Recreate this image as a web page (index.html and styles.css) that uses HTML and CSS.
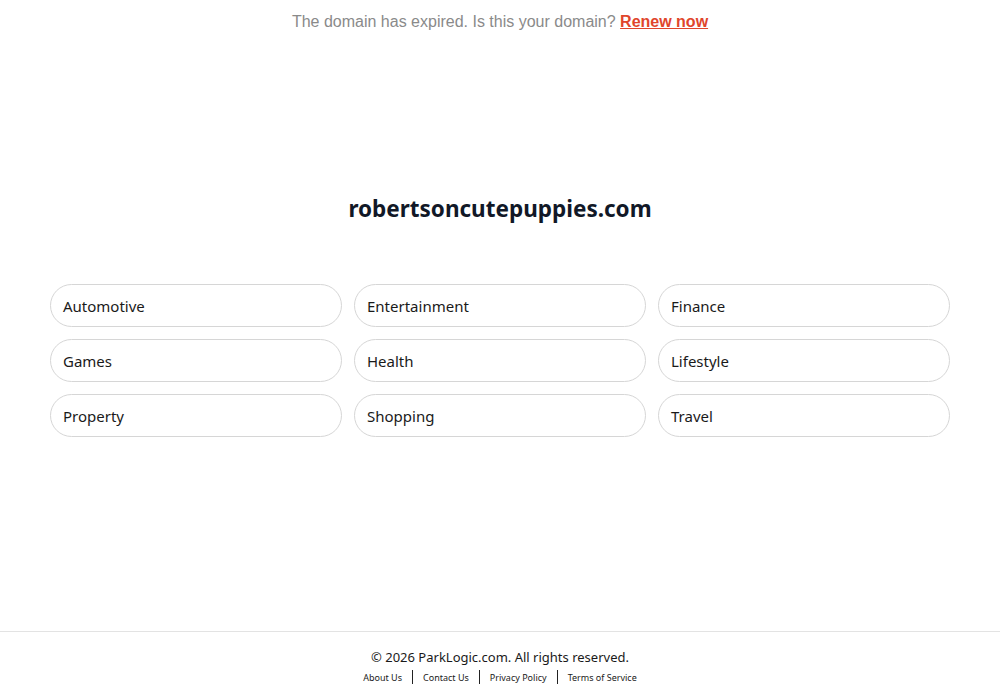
FILE: index.html
```html
<!DOCTYPE html>
<html lang="en">
<head>
<meta charset="utf-8">
<title>robertsoncutepuppies.com</title>
<link rel="stylesheet" href="styles.css">
</head>
<body>
<div class="page">
  <div class="banner">The domain has expired. Is this your domain? <a href="#" class="renew">Renew now</a></div>
  <main class="main">
    <h1 class="domain">robertsoncutepuppies.com</h1>
    <div class="grid">
      <a href="#" class="pill">Automotive</a>
      <a href="#" class="pill">Entertainment</a>
      <a href="#" class="pill">Finance</a>
      <a href="#" class="pill">Games</a>
      <a href="#" class="pill">Health</a>
      <a href="#" class="pill">Lifestyle</a>
      <a href="#" class="pill">Property</a>
      <a href="#" class="pill">Shopping</a>
      <a href="#" class="pill">Travel</a>
    </div>
  </main>
  <footer class="footer">
    <div class="copy">© 2026 ParkLogic.com. All rights reserved.</div>
    <div class="links">
      <a href="#">About Us</a><span class="sep"></span><a href="#">Contact Us</a><span class="sep"></span><a href="#">Privacy Policy</a><span class="sep"></span><a href="#">Terms of Service</a>
    </div>
  </footer>
</div>
</body>
</html>
```
FILE: styles.css
```css
* { box-sizing: border-box; }
html, body { margin: 0; padding: 0; background: #fff; }
body { font-family: "Noto Sans", "Open Sans", sans-serif; color: #1a1a1a; }
.page { min-height: 100vh; display: flex; flex-direction: column; }
.banner {
  font-family: "Liberation Sans", Arial, sans-serif;
  font-size: 16px;
  color: #8a8a8a;
  text-align: center;
  padding-top: 13px;
  height: 42px;
}
.renew { color: #e0452b; font-weight: bold; text-decoration: underline; }
.main { flex: 1; padding: 0 50px; }
.domain {
  margin: 153px 0 0;
  font-size: 22.5px;
  font-weight: 700;
  text-align: center;
  color: #111827;
  line-height: 28px;
}
.grid {
  margin-top: 61px;
  display: grid;
  grid-template-columns: repeat(3, 1fr);
  gap: 12px;
}
.pill {
  display: flex;
  align-items: center;
  height: 43px;
  padding: 0 12px;
  border: 1px solid #d6d6d6;
  border-radius: 22px;
  color: #1a1a1a;
  text-decoration: none;
  font-size: 15px;
}
.footer {
  border-top: 1px solid #e3e3e3;
  height: 69px;
  text-align: center;
  padding-top: 16px;
}
.copy { font-size: 13px; color: #1a1a1a; line-height: 18px; }
.links {
  margin-top: 4px;
  display: flex;
  justify-content: center;
  align-items: center;
  font-size: 9px;
}
.links a { color: #1a1a1a; text-decoration: none; }
.sep { display: inline-block; width: 1px; height: 14px; background: #222; margin: 0 10px; }
```
